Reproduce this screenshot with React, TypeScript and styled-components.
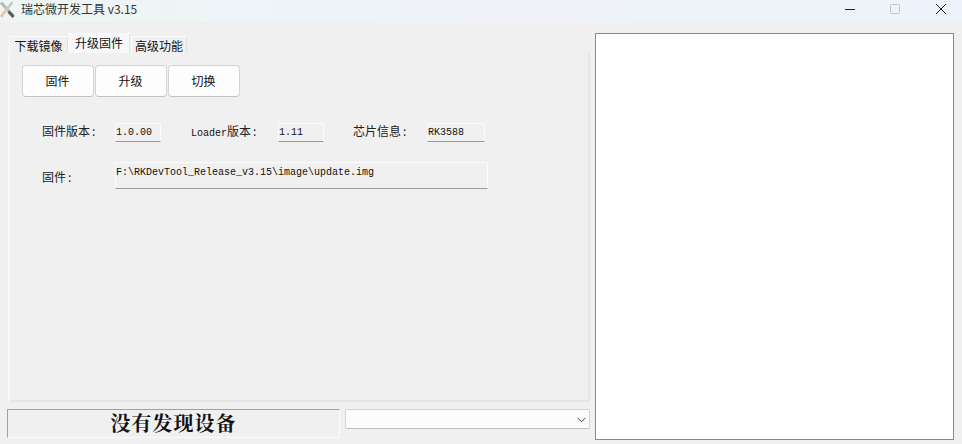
import React from "react";
import styled, { createGlobalStyle } from "styled-components";

const Global = createGlobalStyle`
  html, body { margin: 0; padding: 0; background: #f0f0f0; }
  body { width: 962px; height: 444px; overflow: hidden; font-family: "Noto Sans CJK SC", "Liberation Sans", sans-serif; color: #111; }
`;
const Window = styled.div`
  width: 962px; height: 444px; display: flex; flex-direction: column; background: #f0f0f0;
`;
const TitleBar = styled.header`
  height: 22px; display: flex; align-items: flex-start;
  background: linear-gradient(90deg, #eef6f5 0%, #eef3f8 35%, #eef2fa 100%);
`;
const AppIcon = styled.svg`width: 16px; height: 18px; flex: none; margin-top: 1px;`;
const TitleText = styled.span`margin-left: 5px; font-size: 12px; line-height: 18px; color: #333; flex: 1;`;
const WinControls = styled.div`display: flex; align-items: flex-start; height: 22px; padding-top: 3px; box-sizing: border-box;`;
const WinButton = styled.svg<{ $gap: number }>`width: 12px; height: 12px; margin-right: ${p => p.$gap}px; flex: none;`;
const Body = styled.main`
  flex: 1; display: flex; padding: 11px 8px 4px 7px; gap: 5px; min-height: 0;
`;
const LeftColumn = styled.div`width: 583px; display: flex; flex-direction: column;`;
const TabStrip = styled.div`
  height: 20px; display: flex; align-items: flex-end; padding-left: 2px;
`;
const Tab = styled.div<{ $active?: boolean; $w: number }>`
  width: ${p => p.$w}px; height: ${p => (p.$active ? 20 : 17)}px; text-align: center;
  font-size: 12px; line-height: ${p => (p.$active ? 18 : 17)}px; color: #111;
  background: ${p => (p.$active ? "#f8f8f8" : "#f0f0f0")};
  border-top: 1px solid #fafafa; box-sizing: border-box;
  margin-right: ${p => (p.$active ? 1 : 0)}px;
  box-shadow: inset 1px 0 0 #fafafa, inset -1px 0 0 #e2e2e2;
`;
const Pane = styled.section`
  height: 349px; margin-left: 1px; box-sizing: border-box; padding: 12px 0 0 14px;
  border-left: 2px solid #f9f9f9;
  border-right: 2px solid #e6e6e6; border-bottom: 2px solid #e6e6e6;
`;
const ButtonRow = styled.div`display: flex; gap: 1px; margin-left: -2px; margin-bottom: 26px;`;
const ActionButton = styled.button`
  width: 72px; height: 32px; padding: 0 1px 2px 0; background: #fdfdfd; border: 1px solid #d4d4d4; border-bottom-color: #c2c2c2;
  border-radius: 4px; font: 12px "Noto Sans CJK SC", sans-serif; color: #111;
`;
const InfoRow = styled.div`display: flex; align-items: center; height: 19px; margin-bottom: 21px;`;
const Label = styled.span<{ $w: number; $gap?: number }>`
  width: ${p => p.$w}px; margin-left: ${p => p.$gap ?? 0}px; margin-bottom: 3px; flex: none; font-size: 12px; line-height: 16px; color: #222;
  white-space: nowrap;
`;
const Colon = styled.span`margin-left: 2px;`;
const Mono = styled.span`font: 10px "Liberation Mono", monospace; color: #111;`;
const ReadOnly = styled.div<{ $w: number; $h?: number; $pad?: number }>`
  width: ${p => p.$w}px; height: ${p => p.$h ?? 19}px; box-sizing: border-box; flex: none;
  background: #f0f0f0; border-top: 1px solid #fbfbfb; border-left: 1px solid #fbfbfb; border-right: 1px solid #fbfbfb;
  border-bottom: 1px solid #9a9a9a; padding: ${p => p.$pad ?? 2}px 0 0 0;
  font: 10px/14px "Liberation Mono", monospace; color: #111; white-space: nowrap;
`;
const PathRow = styled.div`display: flex; align-items: flex-start; margin-top: -1px;`;
const PathLabel = styled(Label)`margin-top: 7px;`;
const StatusRow = styled.div`display: flex; margin-top: 7px; gap: 5px; padding: 0;`;
const Status = styled.div`
  width: 333px; height: 29px; box-sizing: border-box; text-align: center;
  border-top: 1px solid #a0a0a0; border-left: 1px solid #a0a0a0;
  border-right: 1px solid #fbfbfb; border-bottom: 1px solid #fbfbfb;
  font: bold 20px/26px "Noto Serif CJK SC", "Noto Sans CJK SC", serif; color: #111; letter-spacing: 1px;
`;
const Combo = styled.div`
  width: 245px; height: 20px; box-sizing: border-box; background: #fcfcfc;
  border: 1px solid #d2d2d2; border-bottom-color: #bdbdbd; border-radius: 2px;
  display: flex; align-items: center; justify-content: flex-end; padding-right: 3px;
`;
const Chevron = styled.svg`width: 9px; height: 6px; margin-top: 1px;`;
const LogPanel = styled.aside`
  width: 359px; height: 407px; box-sizing: border-box; background: #fff; border: 1px solid #8a8a8e; margin-left: 0;
`;

export default function App() {
  return (
    <Window>
      <Global />
      <TitleBar>
        <AppIcon viewBox="0 0 16 18">
          <path d="M1 1.5 L13.5 15" stroke="#b9b9b6" strokeWidth="3" />
          <path d="M8.5 10.5 L13.5 16" stroke="#5b5b50" strokeWidth="3" />
          <path d="M12.5 1 L3 13" stroke="#c9c9c4" strokeWidth="2.4" />
          <path d="M4.5 11 L1 16" stroke="#e8c9a0" strokeWidth="3" />
        </AppIcon>
        <TitleText>瑞芯微开发工具 v3.15</TitleText>
        <WinControls>
          <WinButton $gap={33} viewBox="0 0 12 12"><path d="M1 6.5H11" stroke="#222" strokeWidth="1" /></WinButton>
          <WinButton $gap={34} viewBox="0 0 12 12"><rect x="1.5" y="1.5" width="9" height="9" rx="1" fill="none" stroke="#c4c4c8" /></WinButton>
          <WinButton $gap={15} viewBox="0 0 12 12"><path d="M1 1L11 11M11 1L1 11" stroke="#222" strokeWidth="1" /></WinButton>
        </WinControls>
      </TitleBar>
      <Body>
        <LeftColumn>
          <TabStrip>
            <Tab $w={59}>下载镜像</Tab>
            <Tab $active $w={62}>升级固件</Tab>
            <Tab $w={56}>高级功能</Tab>
          </TabStrip>
          <Pane>
            <ButtonRow>
              <ActionButton>固件</ActionButton>
              <ActionButton>升级</ActionButton>
              <ActionButton>切换</ActionButton>
            </ButtonRow>
            <InfoRow>
              <Label $w={73} $gap={18}>固件版本<Colon>:</Colon></Label>
              <ReadOnly $w={46}>1.0.00</ReadOnly>
              <Label $w={87} $gap={30}><Mono>Loader</Mono>版本<Colon>:</Colon></Label>
              <ReadOnly $w={46}>1.11</ReadOnly>
              <Label $w={74} $gap={29}>芯片信息<Colon>:</Colon></Label>
              <ReadOnly $w={58}>RK3588</ReadOnly>
            </InfoRow>
            <PathRow>
              <PathLabel $w={73} $gap={18}>固件<Colon>:</Colon></PathLabel>
              <ReadOnly $w={373} $h={27} $pad={3}>F:\RKDevTool_Release_v3.15\image\update.img</ReadOnly>
            </PathRow>
          </Pane>
          <StatusRow>
            <Status>没有发现设备</Status>
            <Combo>
              <Chevron viewBox="0 0 9 6"><path d="M0.5 0.8L4.5 4.8L8.5 0.8" fill="none" stroke="#444" strokeWidth="1" /></Chevron>
            </Combo>
          </StatusRow>
        </LeftColumn>
        <LogPanel />
      </Body>
    </Window>
  );
}
